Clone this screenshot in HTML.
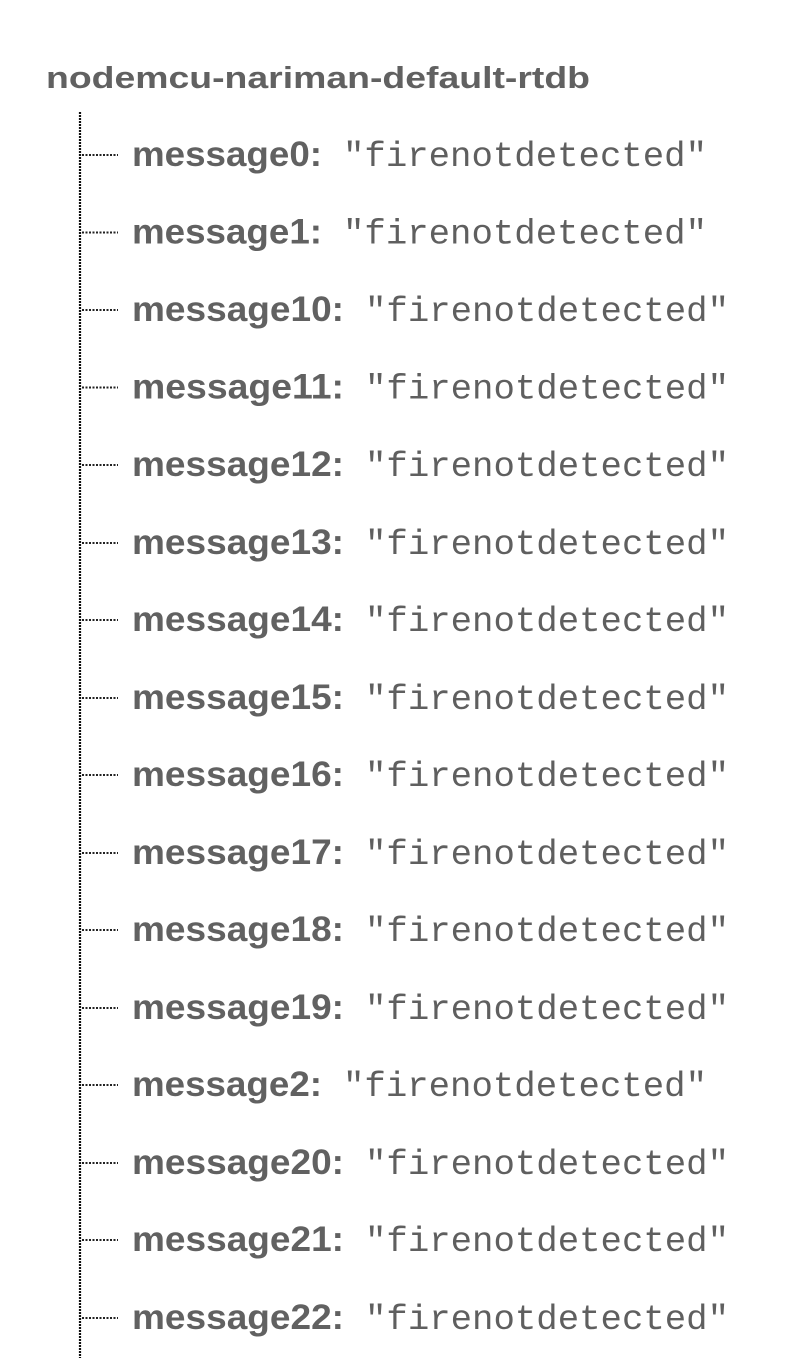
<!DOCTYPE html>
<html><head><meta charset="utf-8"><style>
html,body{margin:0;padding:0;background:#fff;width:790px;height:1358px;overflow:hidden}
svg{display:block}
.k{font-family:"Liberation Sans",sans-serif;font-weight:bold;font-size:35px;fill:#616161}
.v{font-family:"Liberation Mono",monospace;font-size:35px;fill:#5f5f5f}
.t{font-family:"Liberation Sans",sans-serif;font-weight:bold;font-size:31px;fill:#616161}
</style></head><body>
<svg width="790" height="1358" xmlns="http://www.w3.org/2000/svg">
<text class="t" x="46" y="88" textLength="544" lengthAdjust="spacingAndGlyphs">nodemcu-nariman-default-rtdb</text>
<line x1="80" y1="112" x2="80" y2="1358" stroke="#111" stroke-width="2.2" stroke-dasharray="2,1"/>
<g stroke="#222" stroke-width="2" stroke-dasharray="2,1.5">
<line x1="82" y1="155" x2="118" y2="155"/>
<line x1="82" y1="232.5" x2="118" y2="232.5"/>
<line x1="82" y1="310" x2="118" y2="310"/>
<line x1="82" y1="387.5" x2="118" y2="387.5"/>
<line x1="82" y1="465" x2="118" y2="465"/>
<line x1="82" y1="543" x2="118" y2="543"/>
<line x1="82" y1="620" x2="118" y2="620"/>
<line x1="82" y1="698" x2="118" y2="698"/>
<line x1="82" y1="775" x2="118" y2="775"/>
<line x1="82" y1="853" x2="118" y2="853"/>
<line x1="82" y1="930" x2="118" y2="930"/>
<line x1="82" y1="1008" x2="118" y2="1008"/>
<line x1="82" y1="1085" x2="118" y2="1085"/>
<line x1="82" y1="1163" x2="118" y2="1163"/>
<line x1="82" y1="1240" x2="118" y2="1240"/>
<line x1="82" y1="1318" x2="118" y2="1318"/>
</g>
<text class="k" x="132" y="166" textLength="190" lengthAdjust="spacingAndGlyphs">message0:</text>
<text class="v" x="343" y="166" textLength="364" lengthAdjust="spacingAndGlyphs">"firenotdetected"</text>
<text class="k" x="132" y="243.5" textLength="190" lengthAdjust="spacingAndGlyphs">message1:</text>
<text class="v" x="343" y="243.5" textLength="364" lengthAdjust="spacingAndGlyphs">"firenotdetected"</text>
<text class="k" x="132" y="321" textLength="212" lengthAdjust="spacingAndGlyphs">message10:</text>
<text class="v" x="365" y="321" textLength="364" lengthAdjust="spacingAndGlyphs">"firenotdetected"</text>
<text class="k" x="132" y="398.5" textLength="212" lengthAdjust="spacingAndGlyphs">message11:</text>
<text class="v" x="365" y="398.5" textLength="364" lengthAdjust="spacingAndGlyphs">"firenotdetected"</text>
<text class="k" x="132" y="476" textLength="212" lengthAdjust="spacingAndGlyphs">message12:</text>
<text class="v" x="365" y="476" textLength="364" lengthAdjust="spacingAndGlyphs">"firenotdetected"</text>
<text class="k" x="132" y="554" textLength="212" lengthAdjust="spacingAndGlyphs">message13:</text>
<text class="v" x="365" y="554" textLength="364" lengthAdjust="spacingAndGlyphs">"firenotdetected"</text>
<text class="k" x="132" y="631" textLength="212" lengthAdjust="spacingAndGlyphs">message14:</text>
<text class="v" x="365" y="631" textLength="364" lengthAdjust="spacingAndGlyphs">"firenotdetected"</text>
<text class="k" x="132" y="709" textLength="212" lengthAdjust="spacingAndGlyphs">message15:</text>
<text class="v" x="365" y="709" textLength="364" lengthAdjust="spacingAndGlyphs">"firenotdetected"</text>
<text class="k" x="132" y="786" textLength="212" lengthAdjust="spacingAndGlyphs">message16:</text>
<text class="v" x="365" y="786" textLength="364" lengthAdjust="spacingAndGlyphs">"firenotdetected"</text>
<text class="k" x="132" y="864" textLength="212" lengthAdjust="spacingAndGlyphs">message17:</text>
<text class="v" x="365" y="864" textLength="364" lengthAdjust="spacingAndGlyphs">"firenotdetected"</text>
<text class="k" x="132" y="941" textLength="212" lengthAdjust="spacingAndGlyphs">message18:</text>
<text class="v" x="365" y="941" textLength="364" lengthAdjust="spacingAndGlyphs">"firenotdetected"</text>
<text class="k" x="132" y="1019" textLength="212" lengthAdjust="spacingAndGlyphs">message19:</text>
<text class="v" x="365" y="1019" textLength="364" lengthAdjust="spacingAndGlyphs">"firenotdetected"</text>
<text class="k" x="132" y="1096" textLength="190" lengthAdjust="spacingAndGlyphs">message2:</text>
<text class="v" x="343" y="1096" textLength="364" lengthAdjust="spacingAndGlyphs">"firenotdetected"</text>
<text class="k" x="132" y="1174" textLength="212" lengthAdjust="spacingAndGlyphs">message20:</text>
<text class="v" x="365" y="1174" textLength="364" lengthAdjust="spacingAndGlyphs">"firenotdetected"</text>
<text class="k" x="132" y="1251" textLength="212" lengthAdjust="spacingAndGlyphs">message21:</text>
<text class="v" x="365" y="1251" textLength="364" lengthAdjust="spacingAndGlyphs">"firenotdetected"</text>
<text class="k" x="132" y="1329" textLength="212" lengthAdjust="spacingAndGlyphs">message22:</text>
<text class="v" x="365" y="1329" textLength="364" lengthAdjust="spacingAndGlyphs">"firenotdetected"</text>
</svg>
</body></html>
